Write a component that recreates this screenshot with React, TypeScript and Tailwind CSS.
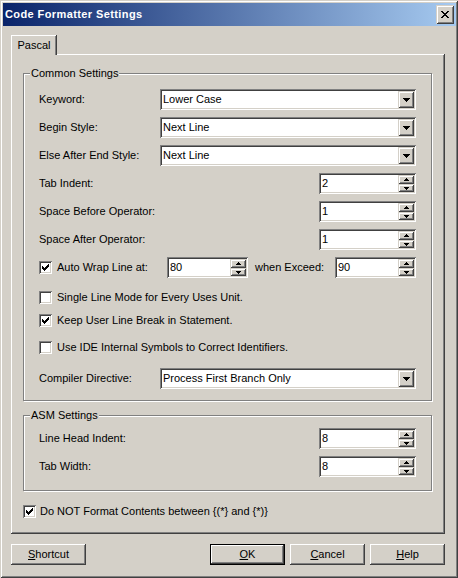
import React from "react";

// classic win9x style 3d edges
const sunken =
  "shadow-[inset_1px_1px_#808080,inset_-1px_-1px_#ffffff,inset_2px_2px_#404040,inset_-2px_-2px_#d4d0c8]";
const raised =
  "shadow-[inset_1px_1px_#d4d0c8,inset_-1px_-1px_#404040,inset_2px_2px_#ffffff,inset_-2px_-2px_#808080]";
const pushBtn =
  "shadow-[inset_-1px_-1px_#404040,inset_1px_1px_#ffffff,inset_-2px_-2px_#808080]";
const defaultBtn =
  "shadow-[inset_0_0_0_1px_#000000,inset_-2px_-2px_#404040,inset_2px_2px_#ffffff,inset_-3px_-3px_#808080]";
const etched =
  "shadow-[inset_0_0_0_1px_#808080,inset_2px_2px_#ffffff,1px_1px_#ffffff]";

const DownArrow = () => (
  <svg width="7" height="4" shapeRendering="crispEdges">
    <rect x="0" y="0" width="7" height="1" />
    <rect x="1" y="1" width="5" height="1" />
    <rect x="2" y="2" width="3" height="1" />
    <rect x="3" y="3" width="1" height="1" />
  </svg>
);

const SpinUp = () => (
  <svg width="5" height="3" shapeRendering="crispEdges">
    <rect x="2" y="0" width="1" height="1" />
    <rect x="1" y="1" width="3" height="1" />
    <rect x="0" y="2" width="5" height="1" />
  </svg>
);

const SpinDown = () => (
  <svg width="5" height="3" shapeRendering="crispEdges">
    <rect x="0" y="0" width="5" height="1" />
    <rect x="1" y="1" width="3" height="1" />
    <rect x="2" y="2" width="1" height="1" />
  </svg>
);

const CloseGlyph = () => (
  <svg width="8" height="7" shapeRendering="crispEdges">
    <rect x="0" y="0" width="2" height="1" />
    <rect x="6" y="0" width="2" height="1" />
    <rect x="1" y="1" width="2" height="1" />
    <rect x="5" y="1" width="2" height="1" />
    <rect x="2" y="2" width="4" height="1" />
    <rect x="3" y="3" width="2" height="1" />
    <rect x="2" y="4" width="4" height="1" />
    <rect x="1" y="5" width="2" height="1" />
    <rect x="5" y="5" width="2" height="1" />
    <rect x="0" y="6" width="2" height="1" />
    <rect x="6" y="6" width="2" height="1" />
  </svg>
);

// column tops of the 7x7 check mark, each column is 3px tall
const checkTops = [2, 3, 4, 3, 2, 1, 0];

const Check = ({ checked }: { checked?: boolean }) => (
  <div className={`w-[13px] h-[13px] shrink-0 bg-white flex items-center justify-center ${sunken}`}>
    {checked && (
      <svg width="7" height="7" shapeRendering="crispEdges">
        {checkTops.map((t, i) => (
          <rect key={i} x={i} y={t} width="1" height="3" />
        ))}
      </svg>
    )}
  </div>
);

const Combo = ({ value }: { value: string }) => (
  <div className={`w-[256px] h-[21px] bg-white flex p-[2px] ${sunken}`}>
    <span className="flex-1 pl-[1px] self-center">{value}</span>
    <div className={`w-[16px] bg-[#d4d0c8] flex items-center justify-center ${raised}`}>
      <DownArrow />
    </div>
  </div>
);

const Spin = ({ value, narrow }: { value: string; narrow?: boolean }) => (
  <div className={`${narrow ? "w-[81px]" : "w-[97px]"} h-[21px] bg-white flex p-[2px] ${sunken}`}>
    <span className="flex-1 pl-[1px] self-center">{value}</span>
    <div className="w-[16px] flex flex-col">
      <div className={`h-[9px] bg-[#d4d0c8] flex items-center justify-center ${raised}`}>
        <SpinUp />
      </div>
      <div className={`h-[8px] bg-[#d4d0c8] flex items-center justify-center ${raised}`}>
        <SpinDown />
      </div>
    </div>
  </div>
);

const Row = ({ label, children }: { label: string; children: React.ReactNode }) => (
  <div className="h-[21px] flex items-center justify-between">
    <span>{label}</span>
    {children}
  </div>
);

const CheckRow = ({ label, checked, className }: { label: string; checked?: boolean; className: string }) => (
  <div className={`h-[17px] flex items-center ${className}`}>
    <Check checked={checked} />
    <span className="ml-[5px]">{label}</span>
  </div>
);

const Group = ({ title, className, children }: { title: string; className: string; children: React.ReactNode }) => (
  <div className={`relative px-[16px] ${etched} ${className}`}>
    <span className="absolute left-[7px] top-[-7px] px-[1px] leading-[14px] bg-[#d4d0c8]">{title}</span>
    {children}
  </div>
);

const App = () => {
  return (
    <div
      className={`w-[458px] h-[578px] bg-[#d4d0c8] flex flex-col font-['Liberation_Sans',Arial,sans-serif] text-[11px] text-black ${raised}`}
    >
      {/* Title bar */}
      <div className="ml-[3px] mr-[2px] mt-[3px] h-[23px] flex items-center pl-[2px] pr-[2px] bg-linear-to-r/srgb from-[#0a246a] to-[#a6caf0]">
        <span className="flex-1 font-bold tracking-[0.4px] text-white">Code Formatter Settings</span>
        <div className={`w-[18px] h-[19px] bg-[#d4d0c8] flex items-center justify-center ${raised}`}>
          <CloseGlyph />
        </div>
      </div>

      <div className="flex flex-col pl-[11px] pr-[13px] pt-[9px]">
        {/* Tabs */}
        <div className="flex">
          <div className="relative z-10 w-[46px] h-[20px] bg-[#d4d0c8] flex items-center justify-center shadow-[inset_-1px_0_#404040,inset_1px_1px_#ffffff,inset_-2px_0_#808080]">
            Pascal
          </div>
        </div>

        {/* Tab page */}
        <div className="-mt-[1px] h-[480px] flex flex-col pl-[12px] pr-[13px] pt-[19px] shadow-[inset_-1px_-1px_#404040,inset_1px_1px_#ffffff,inset_-2px_-2px_#808080]">
          <Group title="Common Settings" className="h-[328px] pt-[16px] flex flex-col">
            <div className="flex flex-col gap-[7px]">
              <Row label="Keyword:">
                <Combo value="Lower Case" />
              </Row>
              <Row label="Begin Style:">
                <Combo value="Next Line" />
              </Row>
              <Row label="Else After End Style:">
                <Combo value="Next Line" />
              </Row>
              <Row label="Tab Indent:">
                <Spin value="2" />
              </Row>
              <Row label="Space Before Operator:">
                <Spin value="1" />
              </Row>
              <Row label="Space After Operator:">
                <Spin value="1" />
              </Row>
              <div className="h-[21px] flex items-center">
                <Check checked />
                <span className="ml-[5px] w-[110px]">Auto Wrap Line at:</span>
                <Spin value="80" narrow />
                <span className="ml-[7px]">when Exceed:</span>
                <div className="ml-auto">
                  <Spin value="90" narrow />
                </div>
              </div>
            </div>
            <CheckRow className="mt-[11px]" label="Single Line Mode for Every Uses Unit." />
            <CheckRow className="mt-[6px]" label="Keep User Line Break in Statement." checked />
            <CheckRow className="mt-[10px]" label="Use IDE Internal Symbols to Correct Identifiers." />
            <div className="mt-[12px]">
              <Row label="Compiler Directive:">
                <Combo value="Process First Branch Only" />
              </Row>
            </div>
          </Group>

          <Group title="ASM Settings" className="mt-[14px] h-[76px] pt-[13px] flex flex-col gap-[7px]">
            <Row label="Line Head Indent:">
              <Spin value="8" />
            </Row>
            <Row label="Tab Width:">
              <Spin value="8" />
            </Row>
          </Group>

          <div className="mt-[12px] h-[17px] flex items-center">
            <Check checked />
            <span className="ml-[4px]">Do NOT Format Contents between {"{(*}"} and {"{*)}"}</span>
          </div>
        </div>

        {/* Buttons */}
        <div className="mt-[10px] flex">
          <button className={`w-[75px] h-[21px] bg-[#d4d0c8] ${pushBtn}`}>
            <u>S</u>hortcut
          </button>
          <div className="ml-auto flex gap-[5px]">
            <button className={`w-[75px] h-[21px] bg-[#d4d0c8] ${defaultBtn}`}>
              <u>O</u>K
            </button>
            <button className={`w-[75px] h-[21px] bg-[#d4d0c8] ${pushBtn}`}>
              <u>C</u>ancel
            </button>
            <button className={`w-[75px] h-[21px] bg-[#d4d0c8] ${pushBtn}`}>
              <u>H</u>elp
            </button>
          </div>
        </div>
      </div>
    </div>
  );
};

export default App;
